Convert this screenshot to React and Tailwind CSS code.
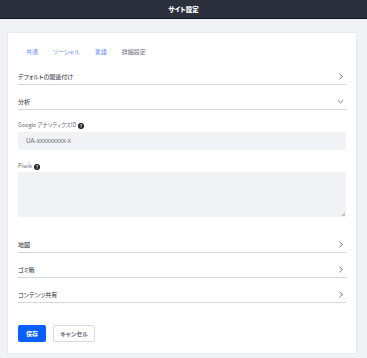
import React from "react";

const font = "[font-family:'Noto_Sans_CJK_JP','Noto_Sans',sans-serif] [font-feature-settings:'palt']";

function Help() {
  return (
    <svg width="6" height="6" viewBox="0 0 16 16" className="ml-[2px] inline-block">
      <circle cx="8" cy="8" r="8" fill="#1c1c24" />
      <path d="M5.6 6.2a2.4 2.4 0 1 1 3.4 2.2c-.7.3-1 .8-1 1.5v.4" stroke="#fff" strokeWidth="1.8" fill="none" strokeLinecap="round" />
      <circle cx="8" cy="12.4" r="1.1" fill="#fff" />
    </svg>
  );
}

function ChevronRight() {
  return (
    <svg width="6" height="7" viewBox="0 0 6 7" fill="none">
      <path d="M1.5 0.8 L4.5 3.5 L1.5 6.2" stroke="#6b6c7e" strokeWidth="0.9" />
    </svg>
  );
}

function ChevronDown() {
  return (
    <svg width="7" height="5" viewBox="0 0 7 5" fill="none">
      <path d="M0.8 1.2 L3.5 3.8 L6.2 1.2" stroke="#6b6c7e" strokeWidth="0.9" />
    </svg>
  );
}

function PanelRow({ label, open = false, className = "" }) {
  return (
    <div className={`flex h-[25px] items-center justify-between border-b border-[#d4d5dd] pt-[9px] pr-[2px] ${className}`}>
      <span className="text-[6px] leading-[9px] text-[#272833]">{label}</span>
      {open ? <ChevronDown /> : <ChevronRight />}
    </div>
  );
}

export default function App() {
  return (
    <div className={`min-h-[358px] bg-[#f1f2f5] ${font}`}>
      <div className="flex h-[19px] items-center justify-center border-b border-[#15161d] bg-[#2c2f3c]">
        <span className="text-[6.5px] font-black leading-none text-white">サイト設定</span>
      </div>

      <div className="ml-[7px] mr-[10px] mt-[13px] rounded-[1px] border border-[#e9e9ef] bg-white px-[10px] pb-[11px] pt-[13px]">
        <div className="flex h-[12px] items-center gap-[15px] pl-[8px] text-[6px] leading-none">
          <span className="text-[#6c8df6]">共通</span>
          <span className="text-[#6c8df6]">ソーシャル</span>
          <span className="text-[#6c8df6]">言語</span>
          <span className="text-[#6b6c7e]">詳細設定</span>
        </div>

        <PanelRow label="デフォルトの関連付け" className="mt-[2px]" />
        <PanelRow label="分析" open />

        <div className="mt-[12px] flex h-[8px] items-center text-[5.5px] leading-none text-[#6b6c7e]">
          Google アナリティクスID
          <Help />
        </div>
        <div className="mt-[2px] flex h-[18px] items-center rounded-[2px] bg-[#f1f2f5] px-[8px] text-[6.5px] text-[#6b6c7e]">
          UA-xxxxxxxxx-x
        </div>

        <div className="mt-[13px] flex h-[8px] items-center text-[5.5px] leading-none text-[#6b6c7e]">
          Piwik
          <Help />
        </div>
        <div className="relative mt-[1px]">
          <textarea className="block h-[45px] w-full resize-none rounded-[2px] bg-[#f1f2f5] outline-none" />
          <svg width="4" height="4" viewBox="0 0 4 4" className="absolute bottom-[1px] right-[1px]">
            <path d="M4 0 L4 4 L0 4 Z" fill="#c4c5cf" />
          </svg>
        </div>

        <PanelRow label="地図" className="mt-[11px]" />
        <PanelRow label="ゴミ箱" />
        <PanelRow label="コンテンツ共有" />

        <div className="mt-[22px] flex gap-[7px]">
          <button className="flex h-[17px] w-[28px] items-center justify-center rounded-[2px] bg-[#0b5fff] text-[6px] font-bold text-white">
            保存
          </button>
          <button className="flex h-[17px] w-[42px] items-center justify-center rounded-[2px] border border-[#dadbe2] bg-white text-[6px] font-bold text-[#6b6c7e]">
            キャンセル
          </button>
        </div>
      </div>
    </div>
  );
}
